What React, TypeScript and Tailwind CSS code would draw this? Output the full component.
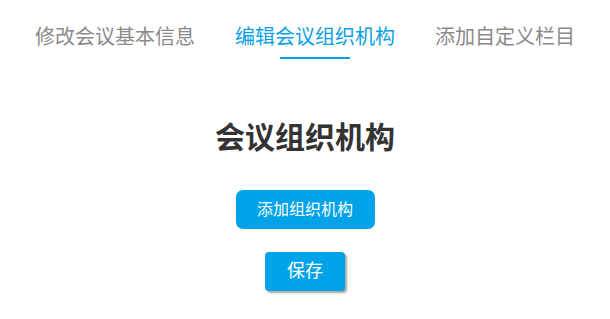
export default function App() {
  const tabs = ["修改会议基本信息", "编辑会议组织机构", "添加自定义栏目"]
  const active = 1

  return (
    <div className="min-h-[319px] w-full bg-white font-['Liberation_Sans','Noto_Sans_CJK_SC',sans-serif]">
      <nav className="flex justify-center gap-10 pt-[23px]">
        {tabs.map((t, i) => (
          <div key={t} className="flex flex-col items-center">
            <span
              className={
                "text-[20px] leading-[28px] " +
                (i === active ? "text-[#0aa0e6]" : "text-[#8a8a8a]")
              }
            >
              {t}
            </span>
            <div
              className={
                "mt-[6px] h-[2px] w-[70px] " +
                (i === active ? "bg-[#0aa0e6]" : "bg-transparent")
              }
            />
          </div>
        ))}
      </nav>

      <div className="flex flex-col items-center">
        <h1 className="mt-[59px] text-[30px] font-bold leading-[40px] text-[#333333]">
          会议组织机构
        </h1>
        <button className="mt-[32px] h-[39px] w-[139px] rounded-[7px] bg-[#00a2e8] text-[16px] text-white">
          添加组织机构
        </button>
        <button className="mt-[23px] h-[39px] w-[80px] rounded-[4px] bg-[#00a2e8] text-[18px] text-white shadow-[2px_2px_2px_rgba(0,0,0,0.35)]">
          保存
        </button>
      </div>
    </div>
  )
}
